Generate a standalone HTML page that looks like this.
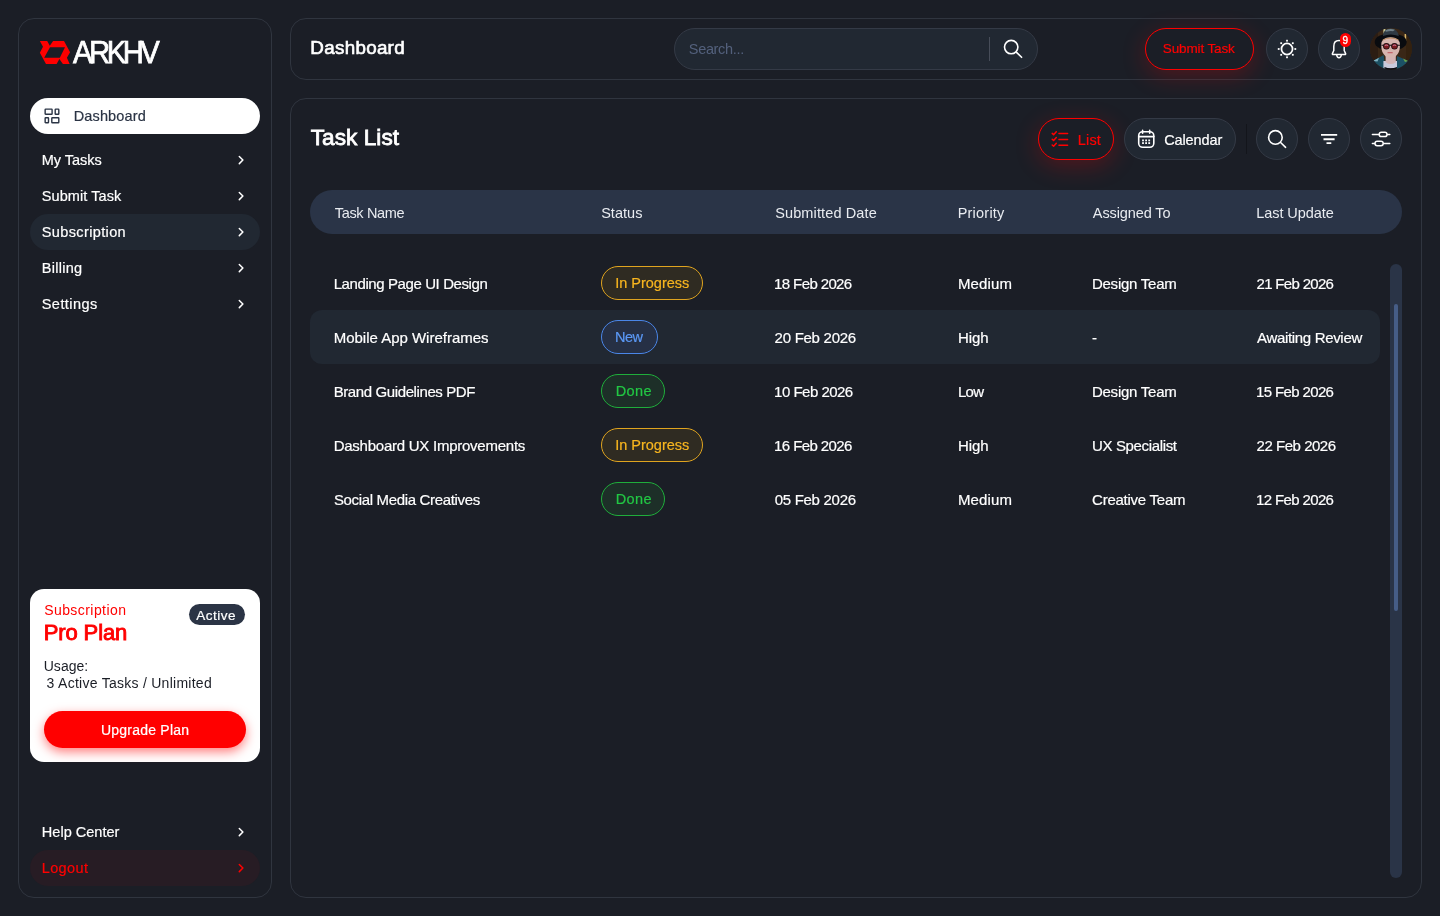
<!DOCTYPE html>
<html lang="en">
<head>
<meta charset="utf-8">
<title>ARKHV Dashboard</title>
<style>
*{box-sizing:border-box;margin:0;padding:0}
html,body{width:1440px;height:916px;overflow:hidden}
body{background:#1b1e26;color:#fff;font-family:"Liberation Sans",sans-serif;font-size:14px;position:relative}
.abs{position:absolute}
.panel{position:absolute;border:1px solid #30353f;border-radius:16px;background:#1b1e26}
#side{left:18px;top:18px;width:254px;height:880px}
#top{left:290px;top:18px;width:1132px;height:62px}
#main{left:290px;top:98px;width:1132px;height:800px}
.t{position:absolute;white-space:nowrap;line-height:1;font-weight:normal;display:block}
#txt{position:absolute;left:0;top:0;width:1440px;height:916px;will-change:transform}
.nav{position:absolute;left:30px;width:230px;height:36px;border-radius:18px}
.ibtn{position:absolute;width:42px;height:42px;border-radius:21px;background:#212832;border:1px solid #343a46}
.pill{position:absolute;left:601px;height:34.2px;border-radius:17.1px;border:1px solid}
.ip{border-color:#e0a41f;background:#2f2b22}
.nw{border-color:#4a86e8;background:#263045}
.dn{border-color:#1fae3b;background:#1d2f28}
svg{position:absolute;overflow:visible}
</style>
</head>
<body>
<div class="panel" id="side"></div>
<div class="panel" id="top"></div>
<div class="panel" id="main"></div>

<!-- SIDEBAR -->
<svg id="logoicon" style="left:36px;top:36px" width="40" height="32" viewBox="36 36 40 32"><path fill="#ff0000" fill-rule="evenodd" d="M39.85 41.07 L47.2 41.07 L49.8 45.8 L53.1 41.07 L64 41.07 L70.1 52.26 L66.9 57.85 L69.7 63.97 L62.9 63.97 L59.4 59.08 L56.6 63.97 L46 63.97 L39.85 52.8 L43 46.84 Z M50 47.2 L65 47.2 L59.8 57.7 L44.2 57.7 Z"/></svg>
<div class="nav" style="top:98px;background:#fff"></div>
<svg id="dashicon" style="left:44px;top:108px" width="16" height="16" viewBox="0 0 16 16" fill="none" stroke="#2b3445" stroke-width="1.4" stroke-linejoin="round"><rect x="1.15" y="1.15" width="6.95" height="5.05" rx="0.5"/><rect x="11.2" y="1.15" width="3.6" height="5.05" rx="0.5"/><rect x="1.15" y="9.7" width="3.35" height="5" rx="0.5"/><rect x="7.8" y="9.7" width="7" height="5" rx="0.5"/></svg>
<div class="nav" style="top:214px;background:#212832"></div>
<div class="nav" style="top:850px;background:#271c24"></div>
<svg style="left:236px;top:154px" width="10" height="12" viewBox="0 0 10 12" fill="none" stroke="#fff" stroke-width="1.5" stroke-linecap="round" stroke-linejoin="round"><path d="M3.3 2.5 L6.9 6 L3.3 9.6"/></svg>
<svg style="left:236px;top:190px" width="10" height="12" viewBox="0 0 10 12" fill="none" stroke="#fff" stroke-width="1.5" stroke-linecap="round" stroke-linejoin="round"><path d="M3.3 2.5 L6.9 6 L3.3 9.6"/></svg>
<svg style="left:236px;top:226px" width="10" height="12" viewBox="0 0 10 12" fill="none" stroke="#fff" stroke-width="1.5" stroke-linecap="round" stroke-linejoin="round"><path d="M3.3 2.5 L6.9 6 L3.3 9.6"/></svg>
<svg style="left:236px;top:262px" width="10" height="12" viewBox="0 0 10 12" fill="none" stroke="#fff" stroke-width="1.5" stroke-linecap="round" stroke-linejoin="round"><path d="M3.3 2.5 L6.9 6 L3.3 9.6"/></svg>
<svg style="left:236px;top:298px" width="10" height="12" viewBox="0 0 10 12" fill="none" stroke="#fff" stroke-width="1.5" stroke-linecap="round" stroke-linejoin="round"><path d="M3.3 2.5 L6.9 6 L3.3 9.6"/></svg>
<svg style="left:236px;top:826px" width="10" height="12" viewBox="0 0 10 12" fill="none" stroke="#fff" stroke-width="1.5" stroke-linecap="round" stroke-linejoin="round"><path d="M3.3 2.5 L6.9 6 L3.3 9.6"/></svg>
<svg style="left:236px;top:862px" width="10" height="12" viewBox="0 0 10 12" fill="none" stroke="#ff0000" stroke-width="1.5" stroke-linecap="round" stroke-linejoin="round"><path d="M3.3 2.5 L6.9 6 L3.3 9.6"/></svg>

<div class="abs" id="card" style="left:30px;top:589px;width:230px;height:173px;border-radius:14px;background:#fff"></div>
<div class="abs" style="left:189px;top:604px;width:56px;height:21px;border-radius:10.5px;background:#2b3445"></div>
<div class="abs" id="upg" style="left:44px;top:711px;width:202px;height:37px;border-radius:18.5px;background:#ff0000;box-shadow:0 4px 11px rgba(255,0,0,.5)"></div>

<!-- TOP BAR -->
<div class="abs" id="search" style="left:674px;top:28px;width:364px;height:42px;border-radius:21px;background:#212832;border:1px solid #343a46"></div>
<div class="abs" style="left:989px;top:37px;width:1px;height:24px;background:#474d59"></div>
<svg style="left:1000px;top:36px" width="24" height="24" viewBox="0 0 24 24" fill="none" stroke="#fff" stroke-width="1.6" stroke-linecap="round"><circle cx="11.2" cy="11.1" r="6.7"/><path d="M16.3 16.1 L21.6 21.3"/></svg>
<div class="abs" id="submit" style="left:1145px;top:28px;width:109px;height:42px;border-radius:21px;border:1px solid #f00;background:#1b1e26;box-shadow:0 6px 24px rgba(255,0,0,.24)"></div>
<div class="ibtn" style="left:1266px;top:28px"></div>
<svg id="sun" style="left:1266px;top:28px" width="42" height="42" viewBox="0 0 42 42" fill="#fff"><circle cx="21" cy="21" r="5.55" fill="none" stroke="#fff" stroke-width="1.75"/><g><rect x="20.1" y="11.8" width="1.8" height="1.8"/><rect x="20.1" y="28.4" width="1.8" height="1.8"/><rect x="11.8" y="20.1" width="1.8" height="1.8"/><rect x="28.4" y="20.1" width="1.8" height="1.8"/><rect x="14.3" y="14.3" width="1.8" height="1.8"/><rect x="25.9" y="14.3" width="1.8" height="1.8"/><rect x="14.3" y="25.9" width="1.8" height="1.8"/><rect x="25.9" y="25.9" width="1.8" height="1.8"/></g></svg>
<div class="ibtn" style="left:1318px;top:28px"></div>
<svg id="bell" style="left:1318px;top:28px" width="42" height="42" viewBox="0 0 42 42" fill="none" stroke="#fff" stroke-width="1.5" stroke-linecap="round" stroke-linejoin="round"><path d="M21 12.5 C17.6 12.5 15.8 15 15.8 18.2 L15.8 22.5 L14.4 25.6 C14.2 26.2 14.5 26.6 15.1 26.6 L26.9 26.6 C27.5 26.6 27.8 26.2 27.6 25.6 L26.2 22.5 L26.2 18.2 C26.2 15 24.4 12.5 21 12.5 Z"/><path d="M18.7 27 C19 29 20 29.7 21 29.7 C22 29.7 23 29 23.3 27"/></svg>
<div class="abs" id="badge" style="left:1340.1px;top:32.9px;width:11.2px;height:14.2px;border-radius:5.6px;background:#ff0000"></div>

<svg id="avatar" style="left:1370px;top:28px" width="42" height="42" viewBox="0 0 42 42"><defs><clipPath id="avc"><circle cx="21" cy="20.8" r="20.9"/></clipPath></defs><g clip-path="url(#avc)"><rect width="42" height="42" fill="#3a2716"/><rect x="0" y="0" width="8" height="42" fill="#2c1d13"/><rect x="36" y="0" width="6" height="42" fill="#33210f"/><rect x="34.6" y="6" width="1.6" height="7" fill="#d9b66a"/><rect x="13.4" y="0.5" width="2" height="5" fill="#d4d19a"/>
<ellipse cx="20.7" cy="14" rx="16" ry="8.8" fill="#090b0f"/>
<path d="M12.9 8 Q13.2 0.6 20.6 0.2 Q27.6 0.6 28.8 8 Q20.6 4.8 12.9 8 Z" fill="#2f3a43"/><path d="M15 2.4 Q20 0 25 1.8 L23 3.2 Q20 2.6 16 3.8 Z" fill="#6f7f86"/>
<path d="M2.6 33.2 L13.6 27 L15.5 42 L0 42 Z" fill="#1b4f62"/><path d="M27 28 L38.4 33 L42 42 L26 42 Z" fill="#1b5166"/><path d="M2.8 33 L9 29.8 L7.5 33.6 Z" fill="#7fb0c0"/><path d="M33 30.5 L38 33 L35 34 Z" fill="#6aa34a"/>
<path d="M13.4 33 H27 V40.5 H13.4 Z" fill="#c9cadb"/><path d="M14.5 39 Q20.5 41.5 27 39 V42 H14.5 Z" fill="#0a0c11"/>
<path d="M15.6 24 H25.8 V34.2 Q20.6 38 15.6 34.2 Z" fill="#d3b4b4"/>
<path d="M11.2 17 Q11.4 9.4 20.5 9.3 Q29.8 9.4 30 17 Q30 25 25.5 28.4 Q20.6 31.2 15.8 28.4 Q11.2 25 11.2 17 Z" fill="#d6b5af"/>
<path d="M12.2 12.8 Q20.5 8 29 12.8 L28.4 11.4 Q20.5 7.6 12.8 11.4 Z" fill="#b98d63"/>
<path d="M11.4 16.8 H30 V17.8 H11.4 Z" fill="#1a1014"/>
<circle cx="16.4" cy="18.2" r="3.3" fill="#1a0c10"/><circle cx="24.5" cy="18.2" r="3.3" fill="#1a0c10"/><circle cx="16.4" cy="18.3" r="2.5" fill="#7a1a1f"/><circle cx="24.5" cy="18.3" r="2.5" fill="#7a1a1f"/><path d="M14.6 17.2 Q16.4 16 18.2 17.2 L18 17.9 Q16.4 16.9 14.8 17.9 Z" fill="#c77a9a"/><path d="M22.7 17.2 Q24.5 16 26.3 17.2 L26.1 17.9 Q24.5 16.9 22.9 17.9 Z" fill="#c77a9a"/>
<rect x="17.4" y="24.1" width="5.4" height="1.2" rx=".6" fill="#c3666c"/><path d="M19.4 20.5 Q20.5 22.4 21.6 20.5 Z" fill="#c9a39f"/></g></svg>


<!-- MAIN -->
<div class="abs" id="listbtn" style="left:1038px;top:118px;width:76px;height:42px;border-radius:21px;border:1px solid #f00;background:#1b1e26;box-shadow:0 6px 24px rgba(255,0,0,.24)"></div>
<div class="abs" id="calbtn" style="left:1124px;top:118px;width:112px;height:42px;border-radius:21px;background:#212832;border:1px solid #343a46"></div>
<div class="abs" style="left:1245.5px;top:124px;width:1.5px;height:30px;background:#13151b"></div>
<div class="ibtn" style="left:1256px;top:118px"></div>
<div class="ibtn" style="left:1308px;top:118px"></div>
<div class="ibtn" style="left:1360px;top:118px"></div>

<svg id="listicon" style="left:1044px;top:124px" width="32" height="30" viewBox="1044 124 32 30" fill="none" stroke="#ff0000" stroke-width="1.5" stroke-linecap="round" stroke-linejoin="round"><path d="M1059 133.6 H1067.6 M1059 139.4 H1067.6 M1059 145.2 H1067.6"/><path d="M1052.2 133.4 L1053.6 134.7 L1056.3 131.7 M1052.2 139.2 L1053.6 140.5 L1056.3 137.5 M1052.2 145 L1053.6 146.3 L1056.3 143.3"/></svg>
<svg id="calicon" style="left:1130px;top:124px" width="32" height="30" viewBox="1130 124 32 30" fill="none" stroke="#fff" stroke-width="1.6" stroke-linecap="round"><rect x="1138.7" y="131.7" width="15.1" height="15.6" rx="4"/><path d="M1138.7 136.6 H1153.8 M1142.6 130.4 V133.2 M1149.7 130.4 V133.2"/><g fill="#fff" stroke="none"><rect x="1142.1" y="139.5" width="1.8" height="1.8"/><rect x="1145.2" y="139.5" width="1.8" height="1.8"/><rect x="1148.3" y="139.5" width="1.8" height="1.8"/><rect x="1142.1" y="142.2" width="1.8" height="1.8"/><rect x="1145.2" y="142.2" width="1.8" height="1.8"/><rect x="1148.3" y="142.2" width="1.8" height="1.8"/></g></svg>
<svg id="searchicon2" style="left:1256px;top:118px" width="42" height="42" viewBox="0 0 42 42" fill="none" stroke="#fff" stroke-width="1.6" stroke-linecap="round"><circle cx="19.4" cy="19.4" r="6.8"/><path d="M24.6 24.5 L29.6 29.3"/></svg>
<svg id="filtericon" style="left:1308px;top:118px" width="42" height="42" viewBox="0 0 42 42" fill="none" stroke="#fff" stroke-width="1.9"><path d="M13 16.9 H29.2 M15.5 21.25 H26.6 M18.5 25.1 H23.3"/></svg>
<svg id="slidericon" style="left:1360px;top:118px" width="42" height="42" viewBox="0 0 42 42" fill="#212832" stroke="#fff" stroke-width="1.5" stroke-linecap="round"><path d="M12.4 16.4 H29.8 M12.4 25.5 H29.8"/><rect x="19.2" y="14.2" width="7.8" height="4.4" rx="2.2"/><rect x="15" y="23.3" width="8.2" height="4.4" rx="2.2"/></svg>

<div class="abs" id="thead" style="left:310px;top:190px;width:1092px;height:44px;border-radius:22px;background:#2a3447"></div>
<div class="abs" id="rowhl" style="left:310px;top:310px;width:1070px;height:54px;border-radius:12px;background:#212832"></div>
<div class="pill ip" style="top:266px;width:102.2px"></div>
<div class="pill nw" style="top:320px;width:57.4px"></div>
<div class="pill dn" style="top:374px;width:64px"></div>
<div class="pill ip" style="top:428px;width:102.2px"></div>
<div class="pill dn" style="top:482px;width:64px"></div>
<div class="abs" style="left:1390px;top:264px;width:12px;height:614px;border-radius:6px;background:#2a3447"></div>
<div class="abs" style="left:1394px;top:304px;width:4px;height:307.2px;border-radius:2px;background:#465d87"></div>

<div id="txt">
<nav id="sidenav">
<strong class="t" id="logo" style="left:72.70px;top:37.10px;font-size:31.8px;letter-spacing:-3.800px;color:#fff;-webkit-text-stroke:.75px #fff;transform:scaleX(.92);transform-origin:0 0;">ARKHV</strong>
<span class="t" id="n0" style="left:73.75px;top:108.75px;font-size:14.5px;letter-spacing:0.130px;color:#2b3445;-webkit-text-stroke:.2px #2b3445;">Dashboard</span>
<span class="t" id="n1" style="left:41.82px;top:152.75px;font-size:14.5px;letter-spacing:-0.049px;color:#fff;-webkit-text-stroke:.2px #fff;">My Tasks</span>
<span class="t" id="n2" style="left:41.76px;top:188.75px;font-size:14.5px;letter-spacing:0.088px;color:#fff;-webkit-text-stroke:.2px #fff;">Submit Task</span>
<span class="t" id="n3" style="left:41.76px;top:224.75px;font-size:14.5px;letter-spacing:0.375px;color:#fff;-webkit-text-stroke:.2px #fff;">Subscription</span>
<span class="t" id="n4" style="left:41.82px;top:260.75px;font-size:14.5px;letter-spacing:0.268px;color:#fff;-webkit-text-stroke:.2px #fff;">Billing</span>
<span class="t" id="n5" style="left:41.76px;top:296.75px;font-size:14.5px;letter-spacing:0.449px;color:#fff;-webkit-text-stroke:.2px #fff;">Settings</span>
<span class="t" id="n6" style="left:41.82px;top:824.75px;font-size:14.5px;letter-spacing:0.020px;color:#fff;-webkit-text-stroke:.2px #fff;">Help Center</span>
<span class="t" id="n7" style="left:41.70px;top:860.75px;font-size:14.5px;letter-spacing:0.377px;color:#ff0000;-webkit-text-stroke:.2px #f00;">Logout</span>
</nav>
<section id="plan">
<span class="t" id="c0" style="left:44.16px;top:603.17px;font-size:14px;letter-spacing:0.434px;color:#ff0000;">Subscription</span>
<strong class="t" id="c1" style="left:43.68px;top:622.40px;font-size:22px;letter-spacing:-0.104px;color:#ff0000;-webkit-text-stroke:.9px #f00;">Pro Plan</strong>
<span class="t" id="c2" style="left:196.20px;top:608.59px;font-size:13.5px;letter-spacing:0.500px;color:#fff;-webkit-text-stroke:.2px #fff;">Active</span>
<span class="t" id="c3" style="left:43.69px;top:659.17px;font-size:14px;letter-spacing:0.039px;color:#1b1e26;">Usage:</span>
<span class="t" id="c4" style="left:46.61px;top:676.17px;font-size:14px;letter-spacing:0.264px;color:#1b1e26;">3 Active Tasks / Unlimited</span>
<span class="t" id="c5" style="left:101.01px;top:723.17px;font-size:14px;letter-spacing:0.219px;color:#fff;-webkit-text-stroke:.2px #fff;">Upgrade Plan</span>
</section>
<header id="topbar">
<h1 class="t" id="h0" style="left:310.36px;top:39.11px;font-size:18.8px;letter-spacing:0.297px;color:#fff;-webkit-text-stroke:.65px #fff;">Dashboard</h1>
<span class="t" id="h1" style="left:688.82px;top:41.75px;font-size:14.5px;letter-spacing:-0.331px;color:#53607c;">Search...</span>
<span class="t" id="h2" style="left:1162.75px;top:41.59px;font-size:13.5px;letter-spacing:-0.121px;color:#ff0000;-webkit-text-stroke:.2px #f00;">Submit Task</span>
<span class="t" id="bd" style="left:1342.40px;top:35.55px;font-size:10px;letter-spacing:0.000px;color:#fff;-webkit-text-stroke:.3px #fff;">9</span>
</header>
<div id="toolbar">
<h2 class="t" id="m0" style="left:310.72px;top:126.89px;font-size:22.6px;letter-spacing:0.054px;color:#fff;-webkit-text-stroke:.8px #fff;">Task List</h2>
<span class="t" id="m1" style="left:1077.74px;top:132.75px;font-size:14.5px;letter-spacing:0.201px;color:#ff0000;-webkit-text-stroke:.2px #f00;">List</span>
<span class="t" id="m2" style="left:1164.14px;top:132.75px;font-size:14.5px;letter-spacing:-0.091px;color:#fff;-webkit-text-stroke:.2px #fff;">Calendar</span>
</div>
<div id="colheads">
<span class="t" id="hd0" style="left:334.85px;top:205.75px;font-size:14.5px;letter-spacing:-0.357px;color:#e9ecf1;">Task Name</span>
<span class="t" id="hd1" style="left:601.15px;top:205.75px;font-size:14.5px;letter-spacing:0.029px;color:#e9ecf1;">Status</span>
<span class="t" id="hd2" style="left:775.21px;top:205.75px;font-size:14.5px;letter-spacing:0.124px;color:#e9ecf1;">Submitted Date</span>
<span class="t" id="hd3" style="left:957.67px;top:205.75px;font-size:14.5px;letter-spacing:0.226px;color:#e9ecf1;">Priority</span>
<span class="t" id="hd4" style="left:1092.87px;top:205.75px;font-size:14.5px;letter-spacing:-0.114px;color:#e9ecf1;">Assigned To</span>
<span class="t" id="hd5" style="left:1256.23px;top:205.75px;font-size:14.5px;letter-spacing:-0.056px;color:#e9ecf1;">Last Update</span>
</div>
<div id="row0">
<span class="t" id="r0_0" style="left:333.68px;top:276.32px;font-size:15px;letter-spacing:-0.404px;color:#fff;-webkit-text-stroke:.2px #fff;">Landing Page UI Design</span>
<span class="t" id="r0_1" style="left:615.18px;top:275.75px;font-size:14.5px;letter-spacing:-0.003px;color:#f7b51f;-webkit-text-stroke:.2px #f7b51f;">In Progress</span>
<span class="t" id="r0_2" style="left:774.11px;top:276.32px;font-size:15px;letter-spacing:-0.616px;color:#fff;-webkit-text-stroke:.2px #fff;">18 Feb 2026</span>
<span class="t" id="r0_3" style="left:957.92px;top:276.32px;font-size:15px;letter-spacing:0.127px;color:#fff;-webkit-text-stroke:.2px #fff;">Medium</span>
<span class="t" id="r0_4" style="left:1091.92px;top:276.32px;font-size:15px;letter-spacing:-0.234px;color:#fff;-webkit-text-stroke:.2px #fff;">Design Team</span>
<span class="t" id="r0_5" style="left:1256.59px;top:276.32px;font-size:15px;letter-spacing:-0.687px;color:#fff;-webkit-text-stroke:.2px #fff;">21 Feb 2026</span>
</div>
<div id="row1">
<span class="t" id="r1_0" style="left:333.68px;top:330.32px;font-size:15px;letter-spacing:-0.009px;color:#fff;-webkit-text-stroke:.2px #fff;">Mobile App Wireframes</span>
<span class="t" id="r1_1" style="left:614.90px;top:329.75px;font-size:14.5px;letter-spacing:-0.472px;color:#5b98f5;-webkit-text-stroke:.2px #5b98f5;">New</span>
<span class="t" id="r1_2" style="left:774.59px;top:330.32px;font-size:15px;letter-spacing:-0.266px;color:#fff;-webkit-text-stroke:.2px #fff;">20 Feb 2026</span>
<span class="t" id="r1_3" style="left:957.92px;top:330.32px;font-size:15px;letter-spacing:-0.066px;color:#fff;-webkit-text-stroke:.2px #fff;">High</span>
<span class="t" id="r1_4" style="left:1092.03px;top:330.32px;font-size:15px;letter-spacing:0.000px;color:#fff;-webkit-text-stroke:.2px #fff;">-</span>
<span class="t" id="r1_5" style="left:1257.00px;top:330.32px;font-size:15px;letter-spacing:-0.325px;color:#fff;-webkit-text-stroke:.2px #fff;">Awaiting Review</span>
</div>
<div id="row2">
<span class="t" id="r2_0" style="left:333.67px;top:384.32px;font-size:15px;letter-spacing:-0.391px;color:#fff;-webkit-text-stroke:.2px #fff;">Brand Guidelines PDF</span>
<span class="t" id="r2_1" style="left:615.70px;top:383.75px;font-size:14.5px;letter-spacing:0.363px;color:#22c844;-webkit-text-stroke:.2px #22c844;">Done</span>
<span class="t" id="r2_2" style="left:774.11px;top:384.32px;font-size:15px;letter-spacing:-0.514px;color:#fff;-webkit-text-stroke:.2px #fff;">10 Feb 2026</span>
<span class="t" id="r2_3" style="left:957.92px;top:384.32px;font-size:15px;letter-spacing:-0.717px;color:#fff;-webkit-text-stroke:.2px #fff;">Low</span>
<span class="t" id="r2_4" style="left:1091.92px;top:384.32px;font-size:15px;letter-spacing:-0.234px;color:#fff;-webkit-text-stroke:.2px #fff;">Design Team</span>
<span class="t" id="r2_5" style="left:1256.11px;top:384.32px;font-size:15px;letter-spacing:-0.639px;color:#fff;-webkit-text-stroke:.2px #fff;">15 Feb 2026</span>
</div>
<div id="row3">
<span class="t" id="r3_0" style="left:333.68px;top:438.32px;font-size:15px;letter-spacing:-0.247px;color:#fff;-webkit-text-stroke:.2px #fff;">Dashboard UX Improvements</span>
<span class="t" id="r3_1" style="left:615.18px;top:437.75px;font-size:14.5px;letter-spacing:-0.003px;color:#f7b51f;-webkit-text-stroke:.2px #f7b51f;">In Progress</span>
<span class="t" id="r3_2" style="left:774.11px;top:438.32px;font-size:15px;letter-spacing:-0.599px;color:#fff;-webkit-text-stroke:.2px #fff;">16 Feb 2026</span>
<span class="t" id="r3_3" style="left:957.92px;top:438.32px;font-size:15px;letter-spacing:-0.066px;color:#fff;-webkit-text-stroke:.2px #fff;">High</span>
<span class="t" id="r3_4" style="left:1091.97px;top:438.32px;font-size:15px;letter-spacing:-0.347px;color:#fff;-webkit-text-stroke:.2px #fff;">UX Specialist</span>
<span class="t" id="r3_5" style="left:1256.59px;top:438.32px;font-size:15px;letter-spacing:-0.474px;color:#fff;-webkit-text-stroke:.2px #fff;">22 Feb 2026</span>
</div>
<div id="row4">
<span class="t" id="r4_0" style="left:333.90px;top:492.32px;font-size:15px;letter-spacing:-0.334px;color:#fff;-webkit-text-stroke:.2px #fff;">Social Media Creatives</span>
<span class="t" id="r4_1" style="left:615.70px;top:491.75px;font-size:14.5px;letter-spacing:0.363px;color:#22c844;-webkit-text-stroke:.2px #22c844;">Done</span>
<span class="t" id="r4_2" style="left:774.66px;top:492.32px;font-size:15px;letter-spacing:-0.284px;color:#fff;-webkit-text-stroke:.2px #fff;">05 Feb 2026</span>
<span class="t" id="r4_3" style="left:957.92px;top:492.32px;font-size:15px;letter-spacing:0.127px;color:#fff;-webkit-text-stroke:.2px #fff;">Medium</span>
<span class="t" id="r4_4" style="left:1092.12px;top:492.32px;font-size:15px;letter-spacing:-0.252px;color:#fff;-webkit-text-stroke:.2px #fff;">Creative Team</span>
<span class="t" id="r4_5" style="left:1256.11px;top:492.32px;font-size:15px;letter-spacing:-0.639px;color:#fff;-webkit-text-stroke:.2px #fff;">12 Feb 2026</span>
</div>
</div>
</body>
</html>
